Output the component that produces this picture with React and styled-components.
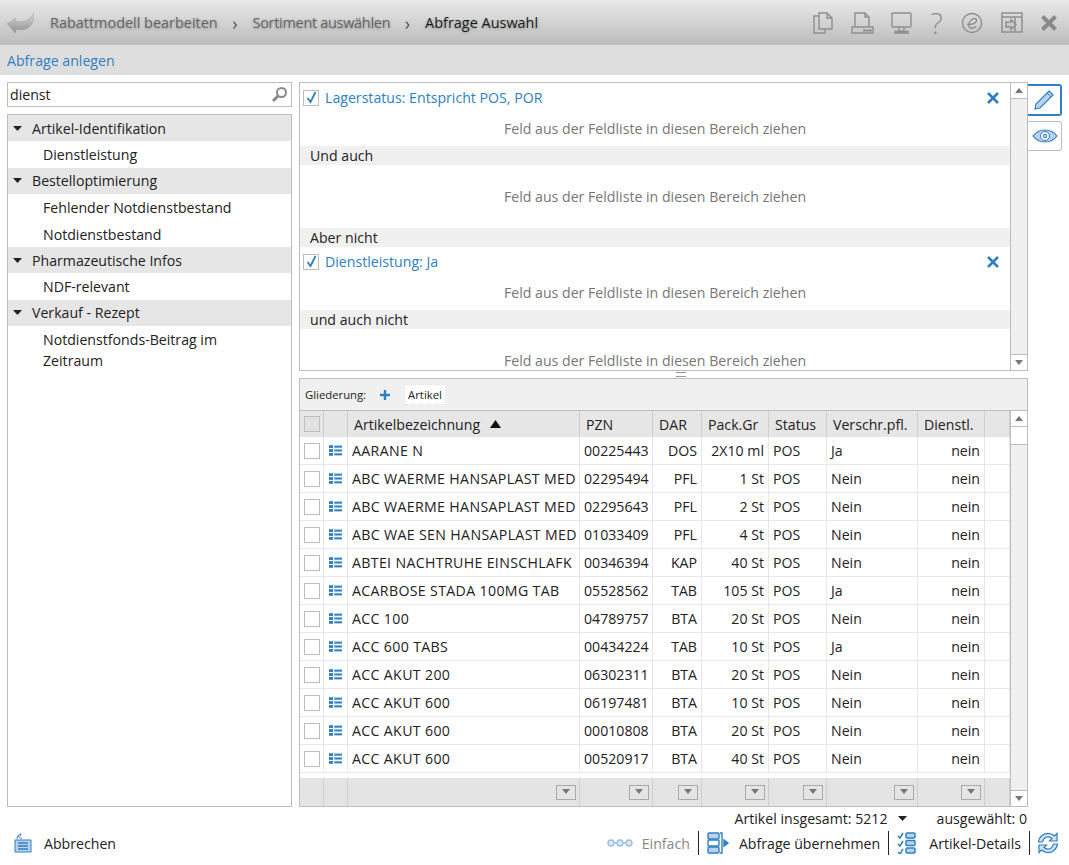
import styled, { createGlobalStyle } from "styled-components";

const rows = [
  ["AARANE N", "00225443", "DOS", "2X10 ml", "Ja"],
  ["ABC WAERME HANSAPLAST MED", "02295494", "PFL", "1 St", "Nein"],
  ["ABC WAERME HANSAPLAST MED", "02295643", "PFL", "2 St", "Nein"],
  ["ABC WAE SEN HANSAPLAST MED", "01033409", "PFL", "4 St", "Nein"],
  ["ABTEI NACHTRUHE EINSCHLAFK", "00346394", "KAP", "40 St", "Nein"],
  ["ACARBOSE STADA 100MG TAB", "05528562", "TAB", "105 St", "Ja"],
  ["ACC 100", "04789757", "BTA", "20 St", "Nein"],
  ["ACC 600 TABS", "00434224", "TAB", "10 St", "Ja"],
  ["ACC AKUT 200", "06302311", "BTA", "20 St", "Nein"],
  ["ACC AKUT 600", "06197481", "BTA", "10 St", "Nein"],
  ["ACC AKUT 600", "00010808", "BTA", "20 St", "Nein"],
  ["ACC AKUT 600", "00520917", "BTA", "40 St", "Nein"],
];

const tree = [
  { title: "Artikel-Identifikation", items: ["Dienstleistung"] },
  { title: "Bestelloptimierung", items: ["Fehlender Notdienstbestand", "Notdienstbestand"] },
  { title: "Pharmazeutische Infos", items: ["NDF-relevant"] },
  { title: "Verkauf - Rezept", items: ["Notdienstfonds-Beitrag im Zeitraum"] },
];

const HINT = "Feld aus der Feldliste in diesen Bereich ziehen";
const COLUMNS = "24px 24px 232px 73px 49px 67px 58px 91px 67px 1fr";

const ListIcon = () => (
  <svg width="16" height="13" viewBox="0 0 16 13" fill="#2f7fc1">
    <rect x="0" y="0" width="5" height="3.5" />
    <rect x="0" y="4.75" width="5" height="3.5" />
    <rect x="0" y="9.5" width="5" height="3.5" />
    <rect x="6.5" y="0.5" width="9.5" height="2.5" />
    <rect x="6.5" y="5.25" width="9.5" height="2.5" />
    <rect x="6.5" y="10" width="9.5" height="2.5" />
  </svg>
);

const ScrollArrow = ({ down }) => (
  <svg width="10" height="6" viewBox="0 0 10 6" fill="#777">
    <path d={down ? "M1 0h8L5 5z" : "M5 0l4 5H1z"} />
  </svg>
);

const CloseIcon = () => (
  <svg width="14" height="14" viewBox="0 0 14 14">
    <path d="M2 2l10 10M12 2L2 12" stroke="#2f7fc1" strokeWidth="2.6" fill="none" />
  </svg>
);

const Caret = () => (
  <svg width="9" height="5" viewBox="0 0 9 5" fill="#222">
    <path d="M0 0h9L4.5 5z" />
  </svg>
);

const GlobalStyle = createGlobalStyle`
  html, body {
    margin: 0;
    padding: 0;
    background: #fff;
  }
  body {
    font-family: "Open Sans", "Noto Sans", "Liberation Sans", sans-serif;
    font-size: 14.15px;
    color: #222;
  }
`;

const Page = styled.div`
  width: 1069px;
  height: 865px;
  display: flex;
  flex-direction: column;
  overflow: hidden;
`;

const Header = styled.header`
  height: 45px;
  flex: none;
  display: flex;
  align-items: center;
  padding: 0 11px 0 7px;
  box-sizing: border-box;
  background: linear-gradient(#e9e9e9, #bcbcbc);
`;

const Crumbs = styled.nav`
  display: flex;
  align-items: center;
  margin-left: 16px;
  flex: 1;
  font-size: 14.45px;
`;

const Crumb = styled.span`
  color: ${(p) => (p.$active ? "#1c1c1c" : "#666")};
  letter-spacing: ${(p) => p.$spacing || 0}px;
  text-shadow: 0 1px 3px rgba(0, 0, 0, 0.3);
`;

const CrumbSep = styled.span`
  color: #555;
  margin: 0 15px 0 14.5px;
  font-size: 18px;
  line-height: 1;
`;

const HeaderIcons = styled.div`
  display: flex;
  align-items: center;
  gap: 17.5px;
`;

const HelpMark = styled.span`
  width: 14px;
  font-size: 29px;
  font-weight: 300;
  line-height: 1;
  text-align: center;
  color: #8f8f8f;
`;

const SubHeader = styled.div`
  height: 30px;
  flex: none;
  background: #dedede;
  display: flex;
  align-items: center;
  padding-left: 7px;
  color: #2f7fc1;
`;

const Main = styled.main`
  height: 732px;
  flex: none;
  display: grid;
  grid-template-columns: 285px 736px 34px;
  padding: 7px 0 0 7px;
  box-sizing: border-box;
`;

const LeftCol = styled.div`
  display: flex;
  flex-direction: column;
  gap: 7px;
`;

const Search = styled.div`
  height: 25px;
  flex: none;
  box-sizing: border-box;
  border: 1px solid #bdbdbd;
  display: flex;
  align-items: center;
  justify-content: space-between;
  padding: 0 3px 0 2px;
  background: #fff;
`;

const Tree = styled.div`
  height: 693px;
  border: 1px solid #bdbdbd;
  box-sizing: border-box;
  flex: none;
`;

const TreeHead = styled.div`
  height: 26.4px;
  background: #e6e6e6;
  display: flex;
  align-items: center;
  gap: 10px;
  padding-left: 5px;
`;

const TreeItem = styled.div`
  padding: 4px 24px 2px 35px;
  min-height: 20.4px;
  line-height: 20.4px;
`;

const RightCol = styled.div`
  padding-left: 7px;
  display: flex;
  flex-direction: column;
  gap: 7px;
`;

const Query = styled.section`
  height: 289px;
  flex: none;
  box-sizing: border-box;
  border: 1px solid #bdbdbd;
  display: grid;
  grid-template-columns: 1fr 17px;
  overflow: hidden;
`;

const QueryBody = styled.div`
  overflow: hidden;
  min-width: 0;
`;

const Clause = styled.div`
  height: 29px;
  display: flex;
  align-items: center;
  gap: 6px;
  padding: 0 10px 0 3px;
  color: #2f7fc1;
`;

const ClauseText = styled.span`
  flex: 1;
`;

const Check = styled.span`
  width: 16px;
  height: 16px;
  flex: none;
  box-sizing: border-box;
  border: 1px solid #bdbdbd;
  background: ${(p) => (p.$head ? "#e2e2e2" : "#fff")};
  display: inline-flex;
  align-items: center;
  justify-content: center;
`;

const DropHint = styled.div`
  height: 63px;
  display: flex;
  align-items: center;
  justify-content: center;
  color: #777;
`;

const ClauseHint = styled(DropHint)`
  height: 34px;
  box-sizing: border-box;
  padding-bottom: 1px;
`;

const GroupTitle = styled.div`
  height: 19px;
  background: #f0f0f0;
  display: flex;
  align-items: center;
  padding-left: 10px;
`;

const ScrollBar = styled.div`
  background: #f0f0f0;
  border-left: 1px solid #bdbdbd;
  display: flex;
  flex-direction: column;
  justify-content: space-between;
`;

const ScrollBtn = styled.div`
  height: 15px;
  background: #fff;
  border-${(p) => (p.$down ? "top" : "bottom")}: 1px solid #bdbdbd;
  display: flex;
  align-items: center;
  justify-content: center;
`;

const Thumb = styled.div`
  height: 17px;
  background: #fff;
  border-bottom: 1px solid #bdbdbd;
`;

const ScrollTop = styled.div`
  display: flex;
  flex-direction: column;
`;

const GridBox = styled.section`
  height: 429px;
  flex: none;
  box-sizing: border-box;
  border: 1px solid #bdbdbd;
  display: flex;
  flex-direction: column;
  position: relative;
`;

const Splitter = styled.span`
  position: absolute;
  top: -7px;
  left: 376px;
  width: 10px;
  height: 3px;
  border-top: 1px solid #999;
  border-bottom: 1px solid #999;
`;

const GridToolbar = styled.div`
  height: 32px;
  flex: none;
  background: #f0f0f0;
  border-bottom: 1px solid #bdbdbd;
  display: flex;
  align-items: center;
  padding-left: 5px;
  font-size: 11.3px;
  box-sizing: border-box;
`;

const PlusBtn = styled.span`
  margin: 0 14px;
  display: inline-flex;
`;

const Chip = styled.span`
  background: #fff;
  border: 1px dotted #ddd;
  padding: 2px 3px;
`;

const GridMain = styled.div`
  flex: 1;
  min-height: 0;
  display: grid;
  grid-template-columns: 1fr 17px;
`;

const Table = styled.div`
  display: flex;
  flex-direction: column;
  min-width: 0;
`;

const HeadRow = styled.div`
  height: 26px;
  flex: none;
  display: grid;
  grid-template-columns: ${COLUMNS};
  background: #e6e6e6;
`;

const HeadCell = styled.div`
  display: flex;
  align-items: center;
  gap: 10px;
  padding-left: ${(p) => (p.$tight ? 4 : 6)}px;
  border-right: 1px solid #cfcfcf;
  overflow: hidden;
  white-space: nowrap;
`;

const Row = styled.div`
  height: 28px;
  flex: none;
  box-sizing: border-box;
  display: grid;
  grid-template-columns: ${COLUMNS};
  border-bottom: 1px solid #e8e8e8;
`;

const Cell = styled.div`
  display: flex;
  align-items: center;
  justify-content: ${(p) => (p.$right ? "flex-end" : "flex-start")};
  padding: 0 4px;
  border-right: 1px solid #e8e8e8;
  white-space: nowrap;
  overflow: hidden;
  min-width: 0;
`;

const NameCell = styled(Cell)`
  letter-spacing: 0.35px;
`;

const IconCell = styled(Cell)`
  padding: 0 5px;
`;

const FilterGap = styled.div`
  flex: 1;
`;

const FilterRow = styled.div`
  height: 28px;
  flex: none;
  display: grid;
  grid-template-columns: ${COLUMNS};
  background: #e4e4e4;
`;

const FilterCell = styled.div`
  display: flex;
  align-items: center;
  justify-content: flex-end;
  padding-right: 3px;
  border-right: 1px solid #cfcfcf;
`;

const FilterBtn = styled.span`
  width: 18px;
  height: 13px;
  border: 1px solid #aaa;
  display: flex;
  align-items: center;
  justify-content: center;
`;

const SideTabs = styled.div`
  display: flex;
  flex-direction: column;
  gap: 5px;
  padding-top: 2px;
`;

const SideTab = styled.button`
  width: 34px;
  height: ${(p) => (p.$active ? 32 : 30)}px;
  box-sizing: border-box;
  padding: 0;
  background: #fff;
  border: ${(p) => (p.$active ? "2px solid #2f7fc1" : "1px solid #bdbdbd")};
  border-left: none;
  border-radius: 0 3px 3px 0;
  display: flex;
  align-items: center;
  justify-content: center;
`;

const Footer = styled.footer`
  flex: 1;
  display: flex;
  flex-direction: column;
  align-items: stretch;
`;

const StatusLine = styled.div`
  height: 22px;
  display: flex;
  align-items: center;
  justify-content: flex-end;
  padding-right: 42px;
  gap: 10px;
`;

const Selected = styled.span`
  margin-left: 20px;
`;

const Actions = styled.div`
  height: 24px;
  margin-top: 2px;
  display: flex;
  align-items: center;
  padding: 0 9px 0 14px;
`;

const Action = styled.span`
  display: flex;
  align-items: center;
  gap: ${(p) => p.$gap || 9}px;
  color: ${(p) => (p.$off ? "#888" : "#222")};
  padding: 0 8px;
  height: 24px;
`;

const Divided = styled(Action)`
  border-left: 1px solid #222;
`;

const RefreshBtn = styled(Divided)`
  padding: 0 0 0 6px;
`;

const Cancel = styled(Action)`
  padding: 0;
  margin-right: auto;
  gap: 12px;
`;

const BackIcon = () => (
  <svg width="27" height="22" viewBox="0 0 34 26">
    <defs>
      <linearGradient id="back" x1="0" y1="0" x2="0" y2="1">
        <stop offset="0" stopColor="#dcdcdc" />
        <stop offset="1" stopColor="#8e8e8e" />
      </linearGradient>
    </defs>
    <path d="M0 14L11 7v4c8 1 18 0 23-11 1 10-3 17-9 20-4 2-9 2-14 1v5z" fill="url(#back)" stroke="#999" strokeWidth=".6" />
  </svg>
);

const DocsIcon = () => (
  <svg width="20" height="22" viewBox="0 0 20 22" fill="none" stroke="#8f8f8f" strokeWidth="1.4">
    <path d="M6 4H1v17h11v-4" />
    <path d="M6 1h8l5 5v11H6zM14 1v5h5" />
  </svg>
);

const PrintIcon = () => (
  <svg width="23" height="22" viewBox="0 0 23 22" fill="none" stroke="#8f8f8f" strokeWidth="1.4">
    <path d="M4 15V1h10l4 4v10" />
    <path d="M1 15h21v6H1z" />
    <path d="M14 1v4h4" />
    <path d="M12 18.500h9" strokeWidth="2" />
  </svg>
);

const MonitorIcon = () => (
  <svg width="21" height="22" viewBox="0 0 21 22" fill="none" stroke="#8f8f8f" strokeWidth="1.4">
    <rect x="1" y="1" width="19" height="14" rx="1" />
    <path d="M8 15v4h5v-4M4 19.500h13v1.500H4z" />
  </svg>
);

const EIcon = () => (
  <svg width="22" height="22" viewBox="0 0 24 24" fill="none" stroke="#8f8f8f">
    <circle cx="12" cy="12" r="10.400" strokeWidth="1.500" />
    <path d="M6.500 13.500c5 .5 10-1 10.500-4 .3-2-2-3-4-2-3 1.500-5 5-4.500 8 .5 2.500 4 3 8 .5" strokeWidth="1.600" />
  </svg>
);

const WindowIcon = () => (
  <svg width="22" height="21" viewBox="0 0 22 21" fill="none" stroke="#8f8f8f" strokeWidth="1.500">
    <rect x="1" y="1" width="20" height="19" />
    <path d="M1 5h20M14 5v15" />
    <path d="M5 10h5V7.500l5 5-5 5V15H5z" fill="#c8c8c8" />
  </svg>
);

const BigClose = () => (
  <svg width="18" height="18" viewBox="0 0 18 18">
    <path d="M2.500 2.500l13 13M15.500 2.500l-13 13" stroke="#8a8a8a" strokeWidth="4" fill="none" />
  </svg>
);

const Pencil = () => (
  <svg width="22" height="22" viewBox="0 0 22 22">
    <path d="M16 2l4 4L7 19l-5 1 1-5z" fill="#b9d3ee" stroke="#2f7fc1" strokeWidth="1.200" />
    <path d="M14 4l4 4" stroke="#2f7fc1" />
  </svg>
);

const Eye = () => (
  <svg width="26" height="14" viewBox="0 0 26 14">
    <path d="M1 7c6-8 18-8 24 0-6 8-18 8-24 0z" fill="#b9d3ee" stroke="#2f7fc1" strokeWidth="1.200" />
    <circle cx="13" cy="7" r="4.500" fill="#fff" stroke="#2f7fc1" />
    <circle cx="13" cy="7" r="1.800" fill="#b9d3ee" stroke="#2f7fc1" />
  </svg>
);

const SearchIcon = () => (
  <svg width="17" height="17" viewBox="0 0 17 17" fill="none">
    <circle cx="10.500" cy="6.500" r="4.500" stroke="#8a8a8a" strokeWidth="2" />
    <path d="M7 10l-5 5" stroke="#8a8a8a" strokeWidth="3" />
  </svg>
);

const CheckMark = () => (
  <svg width="13" height="13" viewBox="0 0 13 13">
    <path d="M2.500 7l3 4 5-10" fill="none" stroke="#2f7fc1" strokeWidth="1.800" />
  </svg>
);

const Plus = () => (
  <svg width="10" height="10" viewBox="0 0 10 10">
    <path d="M5 0v10M0 5h10" stroke="#2f7fc1" strokeWidth="2.400" />
  </svg>
);

const CancelIcon = () => (
  <svg width="18" height="20" viewBox="0 0 18 20">
    <path d="M1 7h16v12H1z" fill="#b9d3ee" stroke="#2f7fc1" />
    <path d="M4 10h10M4 13h10M4 16h10" stroke="#2f7fc1" strokeWidth="1.500" />
    <path d="M3 6c0-3 2-5 4-5M7 1l-1 2M4 3l4 3" stroke="#2f7fc1" fill="none" />
  </svg>
);

const ChainIcon = () => (
  <svg width="26" height="8" viewBox="0 0 26 8" fill="#dbe8f5" stroke="#9dbfe0" strokeWidth="1.400">
    <rect x="1" y="1" width="6" height="6" rx="3" />
    <rect x="10" y="1" width="6" height="6" rx="3" />
    <rect x="19" y="1" width="6" height="6" rx="3" />
    <path d="M7 4h3M16 4h3" />
  </svg>
);

const ApplyIcon = () => (
  <svg width="22" height="22" viewBox="0 0 22 22" fill="none" stroke="#2f7fc1" strokeWidth="1.400">
    <rect x="1" y="1" width="11" height="6" rx="1" fill="#b9d3ee" />
    <rect x="1" y="8" width="11" height="6" rx="1" />
    <rect x="1" y="15" width="11" height="6" rx="1" fill="#b9d3ee" />
    <path d="M13 1h2v20h-2" />
    <path d="M17 8l4 3-4 3z" fill="#2f7fc1" />
  </svg>
);

const DetailsIcon = () => (
  <svg width="19" height="22" viewBox="0 0 19 22" fill="none" stroke="#2f7fc1" strokeWidth="1.500">
    <path d="M1 4l2 2 3-5M1 12l2 2 3-5M1 20l2 2 3-5" />
    <rect x="9" y="1" width="9" height="5" rx="1" fill="#b9d3ee" />
    <rect x="9" y="8.500" width="9" height="5" rx="1" fill="#b9d3ee" />
    <rect x="9" y="16" width="9" height="5" rx="1" fill="#b9d3ee" />
  </svg>
);

const RefreshIcon = () => (
  <svg width="24" height="22" viewBox="0 0 24 22" fill="#cfe1f3" stroke="#2f7fc1" strokeWidth="1.200">
    <path d="M2.500 10C3 4.500 8 1 13 1.500c2.500.3 4 1.200 5.500 2.500L21 1.500V9h-7.500l2.500-2.500c-3.500-3-8.500-1.500-9.500 3.500z" />
    <path d="M21.500 12c-.5 5.500-5.500 9-10.500 8.500-2.500-.3-4-1.200-5.500-2.500L3 20.500V13h7.500L8 15.500c3.500 3 8.500 1.500 9.500-3.500z" />
  </svg>
);

const App = () => {
  return (
    <Page>
      <GlobalStyle />
      <Header>
        <BackIcon />
        <Crumbs>
          <Crumb>Rabattmodell bearbeiten</Crumb>
          <CrumbSep>›</CrumbSep>
          <Crumb $spacing={-0.28}>Sortiment auswählen</Crumb>
          <CrumbSep>›</CrumbSep>
          <Crumb $active>Abfrage Auswahl</Crumb>
        </Crumbs>
        <HeaderIcons>
          <DocsIcon />
          <PrintIcon />
          <MonitorIcon />
          <HelpMark>?</HelpMark>
          <EIcon />
          <WindowIcon />
          <BigClose />
        </HeaderIcons>
      </Header>
      <SubHeader>Abfrage anlegen</SubHeader>
      <Main>
        <LeftCol>
          <Search>
            dienst
            <SearchIcon />
          </Search>
          <Tree>
            {tree.map((group) => (
              <div key={group.title}>
                <TreeHead>
                  <Caret />
                  {group.title}
                </TreeHead>
                {group.items.map((item) => (
                  <TreeItem key={item}>{item}</TreeItem>
                ))}
              </div>
            ))}
          </Tree>
        </LeftCol>
        <RightCol>
          <Query>
            <QueryBody>
              <Clause>
                <Check><CheckMark /></Check>
                <ClauseText>Lagerstatus: Entspricht POS, POR</ClauseText>
                <CloseIcon />
              </Clause>
              <ClauseHint>{HINT}</ClauseHint>
              <GroupTitle>Und auch</GroupTitle>
              <DropHint>{HINT}</DropHint>
              <GroupTitle>Aber nicht</GroupTitle>
              <Clause>
                <Check><CheckMark /></Check>
                <ClauseText>Dienstleistung: Ja</ClauseText>
                <CloseIcon />
              </Clause>
              <ClauseHint>{HINT}</ClauseHint>
              <GroupTitle>und auch nicht</GroupTitle>
              <DropHint>{HINT}</DropHint>
            </QueryBody>
            <ScrollBar>
              <ScrollBtn><ScrollArrow /></ScrollBtn>
              <ScrollBtn $down><ScrollArrow down /></ScrollBtn>
            </ScrollBar>
          </Query>
          <GridBox>
            <Splitter />
            <GridToolbar>
              Gliederung:
              <PlusBtn><Plus /></PlusBtn>
              <Chip>Artikel</Chip>
            </GridToolbar>
            <GridMain>
              <Table>
                <HeadRow>
                  <HeadCell $tight><Check $head /></HeadCell>
                  <HeadCell />
                  <HeadCell>
                    Artikelbezeichnung
                    <svg width="11" height="8" viewBox="0 0 11 8" fill="#111"><path d="M5.500 0L11 8H0z" /></svg>
                  </HeadCell>
                  <HeadCell>PZN</HeadCell>
                  <HeadCell>DAR</HeadCell>
                  <HeadCell>Pack.Gr</HeadCell>
                  <HeadCell>Status</HeadCell>
                  <HeadCell>Verschr.pfl.</HeadCell>
                  <HeadCell>Dienstl.</HeadCell>
                  <HeadCell />
                </HeadRow>
                {rows.map((r) => (
                  <Row key={r[1]}>
                    <Cell><Check /></Cell>
                    <IconCell><ListIcon /></IconCell>
                    <NameCell>{r[0]}</NameCell>
                    <Cell>{r[1]}</Cell>
                    <Cell $right>{r[2]}</Cell>
                    <Cell $right>{r[3]}</Cell>
                    <Cell>POS</Cell>
                    <Cell>{r[4]}</Cell>
                    <Cell $right>nein</Cell>
                    <Cell />
                  </Row>
                ))}
                <FilterGap />
                <FilterRow>
                  <FilterCell />
                  <FilterCell />
                  {[0, 1, 2, 3, 4, 5, 6].map((i) => (
                    <FilterCell key={i}>
                      <FilterBtn><ScrollArrow down /></FilterBtn>
                    </FilterCell>
                  ))}
                  <FilterCell />
                </FilterRow>
              </Table>
              <ScrollBar>
                <ScrollTop>
                  <ScrollBtn><ScrollArrow /></ScrollBtn>
                  <Thumb />
                </ScrollTop>
                <ScrollBtn $down><ScrollArrow down /></ScrollBtn>
              </ScrollBar>
            </GridMain>
          </GridBox>
        </RightCol>
        <SideTabs>
          <SideTab $active><Pencil /></SideTab>
          <SideTab><Eye /></SideTab>
        </SideTabs>
      </Main>
      <Footer>
        <StatusLine>
          Artikel insgesamt: 5212
          <Caret />
          <Selected>ausgewählt: 0</Selected>
        </StatusLine>
        <Actions>
          <Cancel><CancelIcon />Abbrechen</Cancel>
          <Action $off><ChainIcon />Einfach</Action>
          <Divided $gap={10}><ApplyIcon />Abfrage übernehmen</Divided>
          <Divided $gap={13}><DetailsIcon />Artikel-Details</Divided>
          <RefreshBtn><RefreshIcon /></RefreshBtn>
        </Actions>
      </Footer>
    </Page>
  );
};

export default App;
